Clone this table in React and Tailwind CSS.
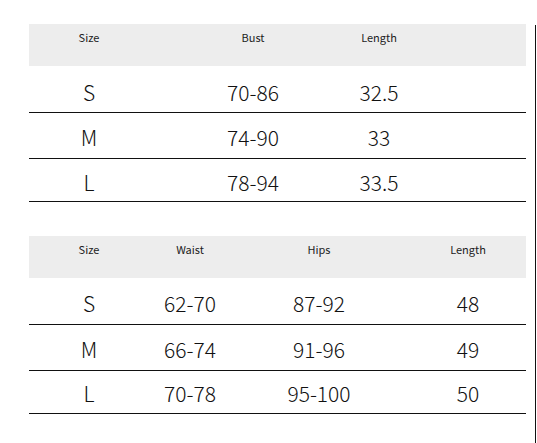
import React from "react";

const font = { fontFamily: '"Noto Sans CJK SC", "Noto Sans", sans-serif' };

function Cell({ children, w, ml, className = "" }) {
  return (
    <div className={`shrink-0 text-center whitespace-nowrap ${w} ${ml} ${className}`}>{children}</div>
  );
}

export default function App() {
  const t1cols = [
    { w: "w-[120px]", ml: "ml-0" },
    { w: "w-[80px]", ml: "ml-[64px]" },
    { w: "w-[80px]", ml: "ml-[46px]" },
  ];
  const t2cols = [
    { w: "w-[120px]", ml: "ml-0" },
    { w: "w-[80px]", ml: "ml-px" },
    { w: "w-[80px]", ml: "ml-[49px]" },
    { w: "w-[80px]", ml: "ml-[69px]" },
  ];
  const t1 = [
    ["S", "70-86", "32.5"],
    ["M", "74-90", "33"],
    ["L", "78-94", "33.5"],
  ];
  const t2 = [
    ["S", "62-70", "87-92", "48"],
    ["M", "66-74", "91-96", "49"],
    ["L", "70-78", "95-100", "50"],
  ];
  const h1 = ["h-[47px] pt-[5px]", "h-[46px] pt-[2px]", "h-[43px] pt-[4px]"];
  const h2 = ["h-[47px] pt-[4px]", "h-[46px] pt-[3px]", "h-[43px] pt-[2px]"];
  return (
    <div className="flex w-[537px] h-[443px] bg-white text-[#111]" style={font}>
      <div className="w-[535px] pl-[29px] pr-[9px]">
        <div className="mt-[24px]">
          <div className="flex h-[42px] bg-[#ededed] pt-[6px] text-[11px] leading-[14px] text-[#222]">
            <Cell {...t1cols[0]}>Size</Cell>
            <Cell {...t1cols[1]}>Bust</Cell>
            <Cell {...t1cols[2]}>Length</Cell>
          </div>
          {t1.map((r, i) => (
            <div key={i} className={`flex items-center border-b-[1.5px] border-[#111] text-[21px] leading-[26px] font-light ${h1[i]}`}>
              {r.map((v, j) => (
                <Cell key={j} {...t1cols[j]}>{v}</Cell>
              ))}
            </div>
          ))}
        </div>
        <div className="mt-[34px]">
          <div className="flex h-[42px] bg-[#ededed] pt-[6px] text-[11px] leading-[14px] text-[#222]">
            <Cell {...t2cols[0]}>Size</Cell>
            <Cell {...t2cols[1]}>Waist</Cell>
            <Cell {...t2cols[2]}>Hips</Cell>
            <Cell {...t2cols[3]}>Length</Cell>
          </div>
          {t2.map((r, i) => (
            <div key={i} className={`flex items-center border-b-[1.5px] border-[#111] text-[21px] leading-[26px] font-light ${h2[i]}`}>
              {r.map((v, j) => (
                <Cell key={j} {...t2cols[j]}>{v}</Cell>
              ))}
            </div>
          ))}
        </div>
      </div>
      <div className="mt-[25px] flex w-[2px] flex-col">
        <div className="flex-1 border-l border-[#111]"></div>
      </div>
    </div>
  );
}
